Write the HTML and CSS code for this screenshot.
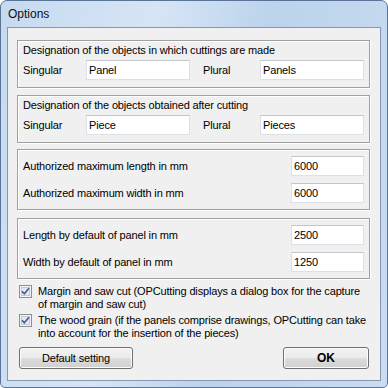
FILE: index.html
```html
<html>
<head>
  <link rel="stylesheet" href="styles.css">
</head>
<body>
<div class="window">
  <div class="titlebar">Options</div>
  <div class="client">

    <div class="group">
      <div class="group-title">Designation of the objects in which cuttings are made</div>
      <div class="pair-row">
        <span class="label">Singular</span>
        <input class="field" type="text" value="Panel">
        <span class="label plural">Plural</span>
        <input class="field" type="text" value="Panels">
      </div>
    </div>

    <div class="group group-next">
      <div class="group-title">Designation of the objects obtained after cutting</div>
      <div class="pair-row">
        <span class="label">Singular</span>
        <input class="field" type="text" value="Piece">
        <span class="label plural">Plural</span>
        <input class="field" type="text" value="Pieces">
      </div>
    </div>

    <div class="group group-sizes first-sizes">
      <div class="size-row">
        <span class="label">Authorized maximum length in mm</span>
        <input class="field num" type="text" value="6000">
      </div>
      <div class="size-row">
        <span class="label">Authorized maximum width in mm</span>
        <input class="field num" type="text" value="6000">
      </div>
    </div>

    <div class="group group-sizes second-sizes">
      <div class="size-row">
        <span class="label">Length by default of panel in mm</span>
        <input class="field num" type="text" value="2500">
      </div>
      <div class="size-row">
        <span class="label">Width by default of panel in mm</span>
        <input class="field num" type="text" value="1250">
      </div>
    </div>

    <div class="checks">
      <div class="check-row">
        <svg class="checkbox" width="13" height="13" viewBox="0 0 13 13">
          <rect x="0.5" y="0.5" width="12" height="12" fill="#f4f4f4" stroke="#8e8f8f"/>
          <rect x="2.5" y="2.5" width="8" height="8" fill="#e6e9ee" stroke="#c4c8cf"/>
          <path d="M3 6.2 L5.3 8.8 L10 3.2" fill="none" stroke="#3d5ba0" stroke-width="1.6"/>
        </svg>
        <span class="check-text">Margin and saw cut (OPCutting displays a dialog box for the capture of margin and saw cut)</span>
      </div>
      <div class="check-row">
        <svg class="checkbox" width="13" height="13" viewBox="0 0 13 13">
          <rect x="0.5" y="0.5" width="12" height="12" fill="#f4f4f4" stroke="#8e8f8f"/>
          <rect x="2.5" y="2.5" width="8" height="8" fill="#e6e9ee" stroke="#c4c8cf"/>
          <path d="M3 6.2 L5.3 8.8 L10 3.2" fill="none" stroke="#3d5ba0" stroke-width="1.6"/>
        </svg>
        <span class="check-text">The wood grain (if the panels comprise drawings, OPCutting can take into account for the insertion of the pieces)</span>
      </div>
    </div>

    <div class="buttons">
      <button class="btn btn-default" type="button">Default setting</button>
      <button class="btn btn-ok" type="button">OK</button>
    </div>

  </div>
</div>
</body>
</html>
```

FILE: styles.css
```css
body {
  margin: 0;
  padding: 0;
  font-family: "Liberation Sans", Arial, sans-serif;
  font-size: 11px;
  letter-spacing: -0.15px;
  color: #000;
}
.window {
  box-sizing: border-box;
  width: 388px;
  height: 388px;
  border: 1px solid #5a7497;
  border-radius: 7px 7px 5px 5px;
  padding: 0 6px 6px 6px;
  display: flex;
  flex-direction: column;
  background: linear-gradient(100deg, #c6daf0 0%, #d6e5f5 35%, #bcd3ec 60%, #c9dcf1 100%);
}
.titlebar {
  height: 26px;
  line-height: 27px;
  padding-left: 1px;
  font-size: 12px;
  letter-spacing: 0;
  color: #111;
}
.client {
  flex: 1;
  border: 1px solid #8797ad;
  background-color: #f0f0f0;
  padding: 12px 10px 0 9px;
  display: flex;
  flex-direction: column;
}
.group {
  border: 1px solid #a0a0a0;
  box-shadow: inset 1px 1px 0 #fff, 1px 1px 0 #fff;
  padding: 3px 4px 7px 5px;
}
.group-next {
  margin-top: 7px;
}
.group-title {
  height: 13px;
  line-height: 13px;
  margin-bottom: 3px;
}
.pair-row {
  display: grid;
  grid-template-columns: 63px 104px 70px 104px;
  align-items: center;
}
.plural {
  padding-left: 13px;
}
.label {
  line-height: 13px;
}
.field {
  box-sizing: border-box;
  height: 20px;
  margin: 0;
  padding: 0 2px;
  border: 1px solid #dde0e5;
  border-top-color: #c2c5cb;
  background-color: #fff;
  font-family: "Liberation Sans", Arial, sans-serif;
  font-size: 11px;
  letter-spacing: -0.15px;
  color: #000;
  outline: none;
}
.group-sizes {
  padding: 6px 5px 6px 5px;
  display: flex;
  flex-direction: column;
  gap: 7px;
}
.first-sizes {
  margin-top: 6px;
}
.second-sizes {
  margin-top: 8px;
}
.size-row {
  display: flex;
  align-items: center;
  justify-content: space-between;
}
.num {
  width: 73px;
}
.checks {
  margin-top: 6px;
  padding-left: 2px;
  display: flex;
  flex-direction: column;
  gap: 3px;
}
.check-row {
  display: flex;
  align-items: flex-start;
}
.checkbox {
  flex: none;
  margin-right: 6px;
}
.check-text {
  flex: 1;
  line-height: 13px;
}
.buttons {
  margin-top: 7px;
  padding: 0 1px 0 2px;
  display: flex;
  justify-content: space-between;
}
.btn {
  box-sizing: border-box;
  height: 22px;
  margin: 0;
  border: 1px solid #707070;
  border-radius: 3px;
  background: linear-gradient(to bottom, #f2f2f2 0%, #ebebeb 50%, #dddddd 51%, #cfcfcf 100%);
  box-shadow: inset 0 0 0 1px #fcfcfc;
  font-family: "Liberation Sans", Arial, sans-serif;
  font-size: 11px;
  letter-spacing: -0.15px;
  color: #000;
  padding: 0;
}
.btn-default {
  width: 114px;
}
.btn-ok {
  width: 86px;
  font-weight: bold;
  font-size: 12px;
  letter-spacing: 0;
}
```
